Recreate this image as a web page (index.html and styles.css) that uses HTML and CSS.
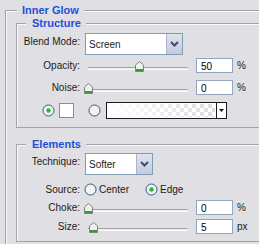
FILE: index.html
```html
<!DOCTYPE html>
<html lang="en">
<head>
    <meta charset="UTF-8">
    <meta name="viewport" content="width=device-width, initial-scale=1.0">
    <title>Inner Glow</title>
    <link rel="stylesheet" href="styles.css">
</head>
<body>
    <fieldset class="group outer">
        <legend>Inner Glow</legend>

        <fieldset class="group structure">
            <legend>Structure</legend>

            <div class="row row-select">
                <span class="label">Blend Mode:</span>
                <div class="select select-blend">
                    <span class="select-value">Screen</span>
                    <span class="select-btn">
                        <svg width="9" height="6" viewBox="0 0 9 6"><polyline points="1,1 4.5,4.5 8,1" fill="none" stroke="#3f4d6b" stroke-width="2"/></svg>
                    </span>
                </div>
            </div>

            <div class="row row-field row-opacity">
                <span class="label">Opacity:</span>
                <div class="slider">
                    <div class="track"></div>
                    <svg class="thumb" style="left: 50px" width="9" height="11" viewBox="0 0 9 11"><path d="M0.5 4 L4.5 0.5 L8.5 4 V10.5 H0.5 Z" fill="#eef1ee" stroke="#7b857d"/><rect x="1" y="8" width="7" height="2" fill="#2ca22c"/></svg>
                </div>
                <div class="num">50</div>
                <span class="unit">%</span>
            </div>

            <div class="row row-field row-noise">
                <span class="label">Noise:</span>
                <div class="slider">
                    <div class="track"></div>
                    <svg class="thumb" style="left: -1px" width="9" height="11" viewBox="0 0 9 11"><path d="M0.5 4 L4.5 0.5 L8.5 4 V10.5 H0.5 Z" fill="#eef1ee" stroke="#7b857d"/><rect x="1" y="8" width="7" height="2" fill="#2ca22c"/></svg>
                </div>
                <div class="num">0</div>
                <span class="unit">%</span>
            </div>

            <div class="row row-colors">
                <svg class="radio" width="13" height="13" viewBox="0 0 13 13"><circle cx="6.5" cy="6.5" r="5.5" fill="#f3f3f1" stroke="#2c5a85"/><circle cx="6.5" cy="6.5" r="2.2" fill="#2fb52f"/></svg>
                <span class="swatch"></span>
                <svg class="radio" width="13" height="13" viewBox="0 0 13 13"><circle cx="6.5" cy="6.5" r="5.5" fill="#f3f3f1" stroke="#2c5a85"/></svg>
                <div class="gradient">
                    <span class="gradient-fill"></span>
                    <span class="gradient-drop">
                        <svg width="5" height="3" viewBox="0 0 5 3"><polygon points="0,0 5,0 2.5,3" fill="#111"/></svg>
                    </span>
                </div>
            </div>
        </fieldset>

        <fieldset class="group elements">
            <legend>Elements</legend>

            <div class="row row-select">
                <span class="label">Technique:</span>
                <div class="select select-technique">
                    <span class="select-value">Softer</span>
                    <span class="select-btn">
                        <svg width="9" height="6" viewBox="0 0 9 6"><polyline points="1,1 4.5,4.5 8,1" fill="none" stroke="#3f4d6b" stroke-width="2"/></svg>
                    </span>
                </div>
            </div>

            <div class="row row-source">
                <span class="label">Source:</span>
                <span class="choice">
                    <svg class="radio" width="13" height="13" viewBox="0 0 13 13"><circle cx="6.5" cy="6.5" r="5.5" fill="#f3f3f1" stroke="#2c5a85"/></svg>
                    Center
                </span>
                <span class="choice">
                    <svg class="radio" width="13" height="13" viewBox="0 0 13 13"><circle cx="6.5" cy="6.5" r="5.5" fill="#f3f3f1" stroke="#2c5a85"/><circle cx="6.5" cy="6.5" r="2.2" fill="#2fb52f"/></svg>
                    Edge
                </span>
            </div>

            <div class="row row-field row-choke">
                <span class="label">Choke:</span>
                <div class="slider">
                    <div class="track"></div>
                    <svg class="thumb" style="left: -1px" width="9" height="11" viewBox="0 0 9 11"><path d="M0.5 4 L4.5 0.5 L8.5 4 V10.5 H0.5 Z" fill="#eef1ee" stroke="#7b857d"/><rect x="1" y="8" width="7" height="2" fill="#2ca22c"/></svg>
                </div>
                <div class="num">0</div>
                <span class="unit">%</span>
            </div>

            <div class="row row-field row-size">
                <span class="label">Size:</span>
                <div class="slider">
                    <div class="track"></div>
                    <svg class="thumb" style="left: 4px" width="9" height="11" viewBox="0 0 9 11"><path d="M0.5 4 L4.5 0.5 L8.5 4 V10.5 H0.5 Z" fill="#eef1ee" stroke="#7b857d"/><rect x="1" y="8" width="7" height="2" fill="#2ca22c"/></svg>
                </div>
                <div class="num">5</div>
                <span class="unit">px</span>
            </div>
        </fieldset>
    </fieldset>
</body>
</html>
```

FILE: styles.css
```css
html, body {
    margin: 0;
    height: 100%;
}
body {
    background: #e0dfe3;
    font-family: "Liberation Sans", Arial, sans-serif;
    font-size: 10px;
    color: #1b1b1b;
    overflow: hidden;
}

/* etched group boxes, cut off at the right edge of the window */
.group {
    margin: 0;
    padding: 0;
    min-width: 0;
    border: 1px solid #a3a3a8;
    border-right: none;
    box-shadow: inset 1px 1px 0 #fafafb;
}
.group > legend {
    margin-left: 9px;
    padding: 0 5px 0 6px;
    font-size: 11px;
    font-weight: bold;
    line-height: 13px;
    color: #1f4fd9;
    background: #e0dfe3;
}
.outer {
    margin: 4px 0 0 5px;
    padding: 0 0 12px 10px;
}
.outer > legend {
    margin-left: 1px;
    padding: 0 5px;
}
.structure {
    padding: 3px 0 8px;
}
.elements {
    margin-top: 10px;
    padding: 2px 0 7px;
}

/* rows */
.row {
    display: flex;
    align-items: center;
}
.label {
    flex: none;
    width: 63px;
    margin-right: 5px;
    text-align: right;
    line-height: 12px;
}
.row-select {
    height: 22px;
}
.row-select .label {
    padding-bottom: 5px;
}
.row-field {
    height: 15px;
}
.row-opacity { margin-top: 3px; }
.row-noise { margin-top: 7px; }
.row-choke { margin-top: 4px; }
.row-size { margin-top: 4px; }

/* dropdowns */
.select {
    display: flex;
    box-sizing: border-box;
    height: 22px;
    border: 1px solid #7f9db9;
    background: #fff;
}
.select-blend { width: 98px; }
.select-technique { width: 68px; }
.select-value {
    flex: 1;
    padding-left: 3px;
    line-height: 21px;
}
.select-btn {
    display: flex;
    align-items: center;
    justify-content: center;
    box-sizing: border-box;
    width: 16px;
    border-left: 1px solid #aab6cf;
    background: linear-gradient(#dfe3ee, #c4cbdd);
}

/* sliders */
.slider {
    position: relative;
    flex: none;
    width: 108px;
    height: 15px;
    margin-right: 3px;
}
.track {
    box-sizing: border-box;
    width: 100px;
    height: 3px;
    margin: 9px 0 0 3px;
    border-top: 1px solid #a2a2a6;
    border-bottom: 1px solid #fbfbfb;
    background: #ededee;
    border-radius: 0 2px 2px 0;
}
.thumb {
    position: absolute;
    top: 3px;
}
.num {
    flex: none;
    box-sizing: border-box;
    width: 37px;
    height: 15px;
    margin-right: 4px;
    padding: 1px 0 0 4px;
    border: 1px solid #93a5bd;
    background: #fff;
    line-height: 13px;
    color: #000;
}
.unit {
    flex: none;
}

/* colour row */
.row-colors {
    height: 17px;
    margin-top: 7px;
    padding-left: 25px;
}
.radio {
    flex: none;
    display: block;
}
.swatch {
    flex: none;
    box-sizing: border-box;
    width: 15px;
    height: 15px;
    margin: 0 14px 0 4px;
    border: 1px solid #8d8d8d;
    background: #fff;
}
.gradient {
    display: flex;
    box-sizing: border-box;
    width: 121px;
    height: 17px;
    margin-left: 5px;
    border: 1px solid #1a1a1a;
}
.gradient-fill {
    flex: 1;
    border: 1px solid #fff;
    background:
        linear-gradient(to right, #fff, rgba(255, 255, 255, 0)),
        repeating-conic-gradient(#dcdcdc 0 25%, #fff 0 50%) 0 0 / 8px 8px;
}
.gradient-drop {
    display: flex;
    align-items: center;
    justify-content: center;
    width: 9px;
    border-left: 1px solid #1a1a1a;
    background: #fff;
}

/* source choices */
.row-source {
    height: 13px;
    margin-top: 8px;
}
.choice {
    display: flex;
    align-items: center;
    gap: 2px;
    margin-left: -1px;
}
.choice + .choice {
    margin-left: 16px;
}
```
